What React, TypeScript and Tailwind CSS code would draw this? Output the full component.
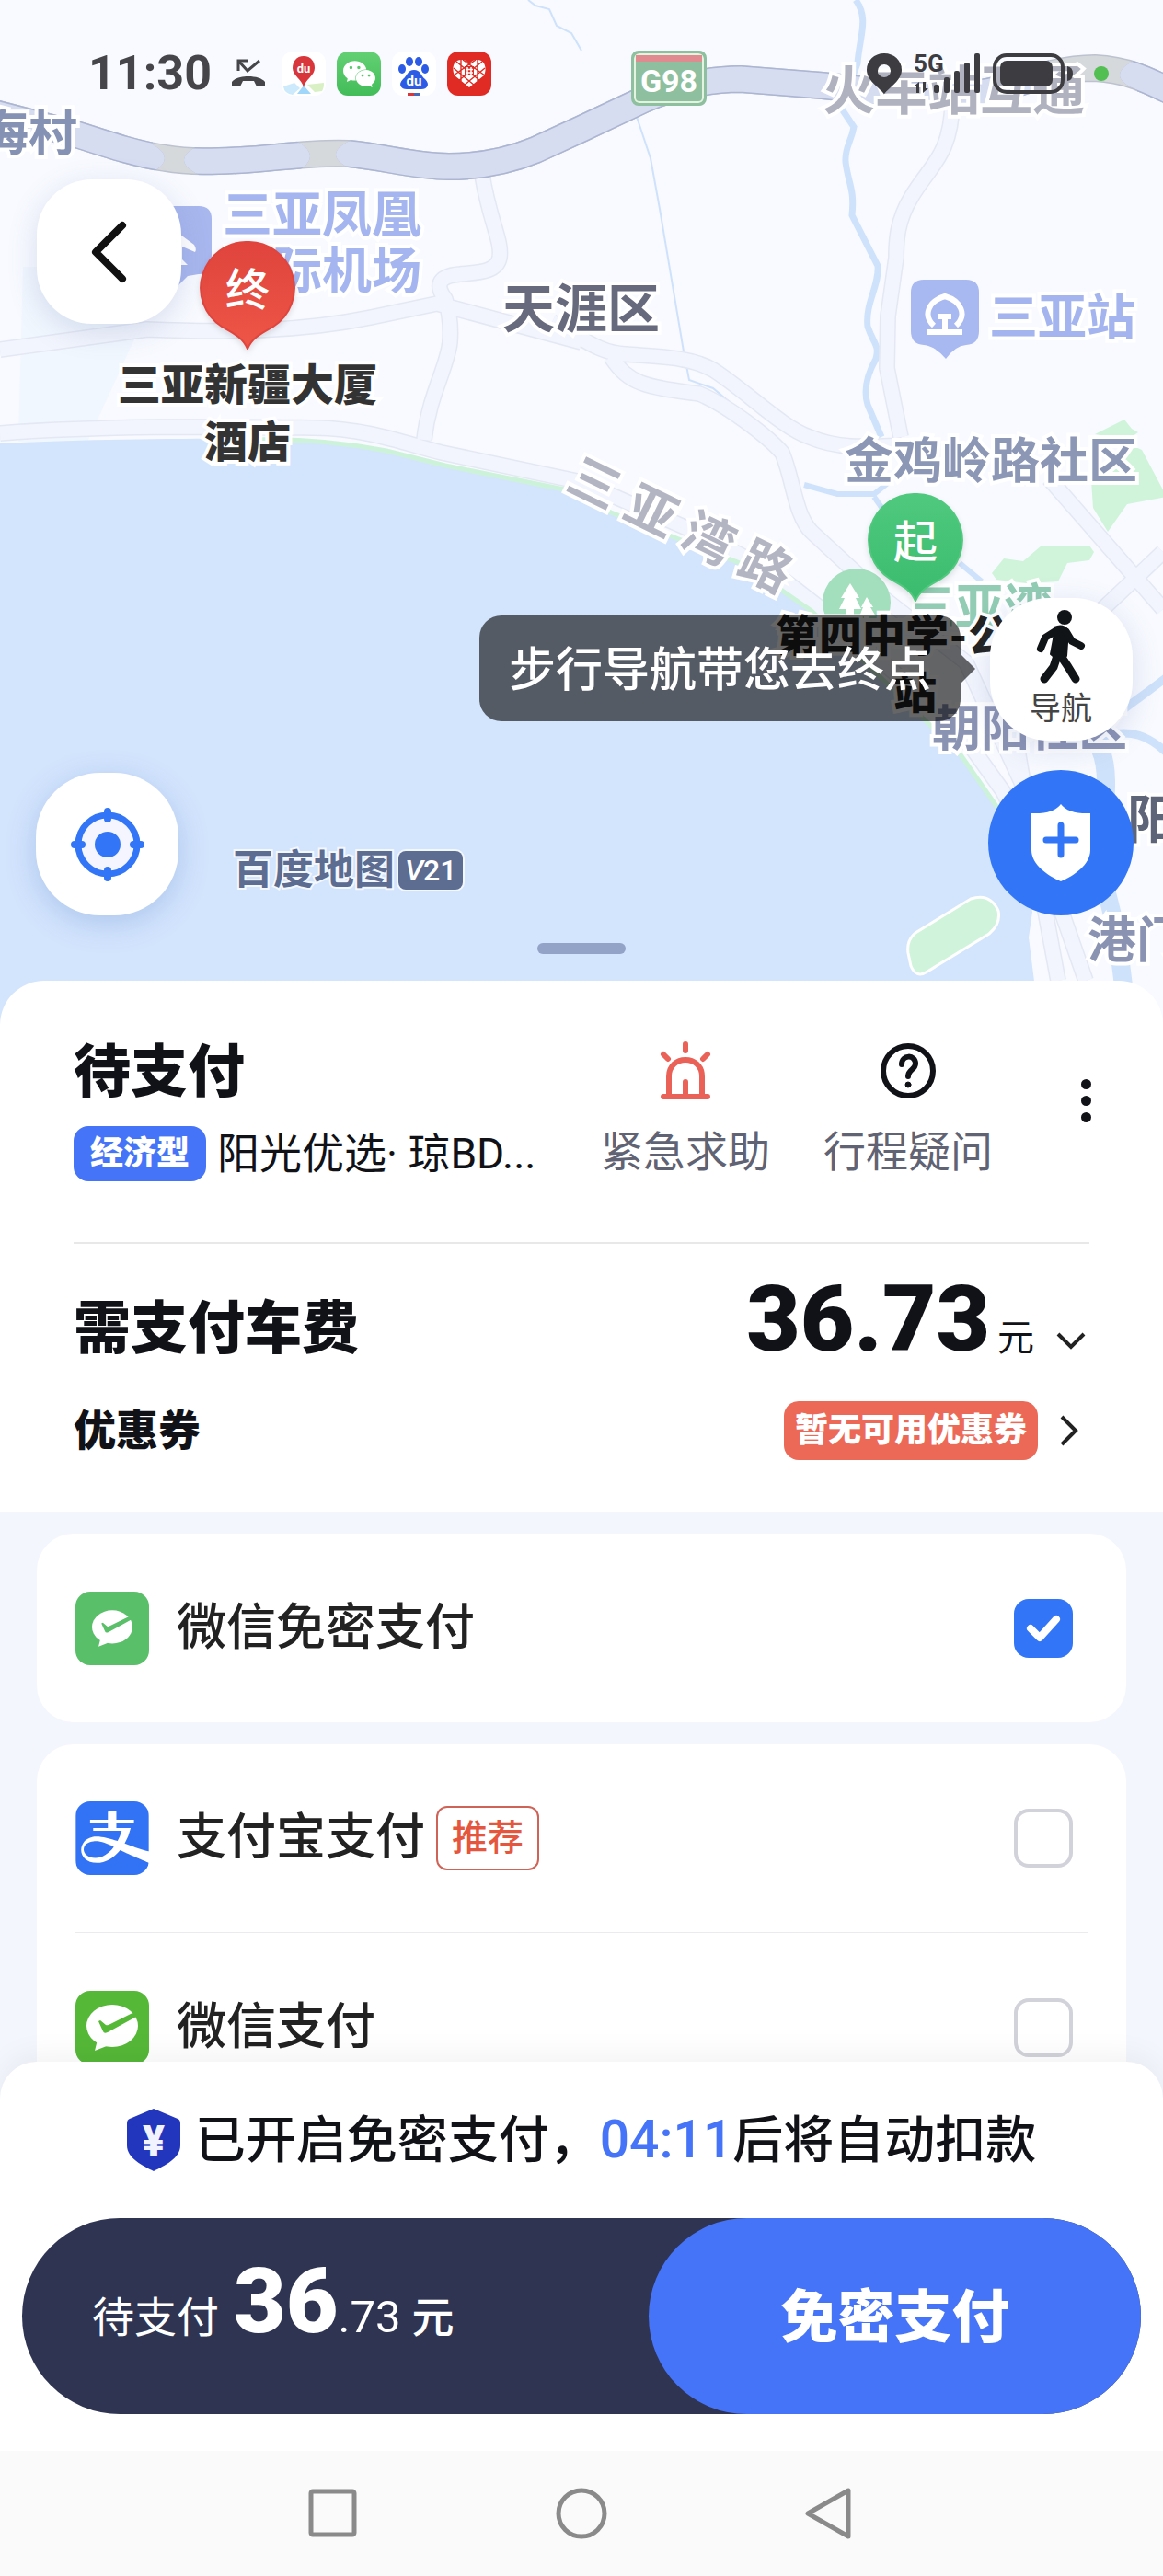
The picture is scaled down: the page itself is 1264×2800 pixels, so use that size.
import { useState, type ReactNode } from "react";
import clsx from "clsx";
import { SiAlipay, SiWechat } from "react-icons/si";

const ROAD =
  "M0 380 L160 358 C250 362 330 360 403 345 L475 330 L632 372 M524 190 C532 240 546 262 543 280 C540 296 520 296 500 298 C474 300 474 312 484 325 C490 345 490 360 489 372 C486 400 466 430 461 478 M0 471 C120 462 250 464 342 465 C400 466 440 482 480 492 L632 524 L760 580 L842 623 L890 660 L1040 790 L1090 860 L1150 980 L1180 1066 M600 350 C632 366 650 384 680 385 C720 388 750 388 775 402 C810 424 850 465 880 475 C910 488 940 486 980 484 M664 388 C684 418 700 420 760 428 C790 440 835 475 850 492 C862 520 864 560 882 578 L960 650 L1050 720 L1110 850 L1150 1066 M1035 110 C1034 170 1010 180 990 215 C975 240 974 262 974 280 L965 344 L964 400 L979 475 M1140 520 L1264 662 M1264 600 L1190 670 M1100 780 L1112 850";

const HIGHWAY =
  "M-10 122 L83 146 C120 158 150 168 180 172 C210 177 240 175 262 174 C300 172 340 165 379 167 C420 171 450 181 488 181 C530 181 560 172 582 163 L632 140 L700 108 C730 95 770 86 805 86 L894 93 L960 100 C1020 108 1060 104 1090 96 C1130 82 1160 74 1190 74 C1225 76 1245 86 1274 100";

function MapCanvas() {
  return (
    <svg
      className="absolute inset-0 h-full w-full"
      viewBox="0 0 1264 1114"
      preserveAspectRatio="xMinYMin slice"
      fill="none"
      aria-hidden="true"
    >
      <defs>
        <clipPath id="spans">
          <path d="M-20 100H166V157Q192 172 166 187V220H-20Z M216 100V158Q184 174 216 190V220H322V187Q352 170 322 153V100Z M382 100V152Q348 168 382 184V220H1140V40H640Z M1236 40V64Q1198 82 1236 98V140H1280V40Z" />
        </clipPath>
      </defs>
      <path d="M0 0H1264V1114H0Z" fill="#f8faff" />
      <path d="M25 290H150V360L95 480H20Z" fill="#eef5fe" opacity=".7" />
      <path
        d="M1190 472L1222 456L1230 466L1237 470L1225 478Z M1225 482L1241 489L1268 540L1225 548L1204 578L1188 552L1186 522Z M1078 623L1091 607L1112 610L1132 593H1184L1189 600L1184 609L1160 612L1150 632L1116 634L1083 630Z"
        fill="#cff4da"
      />
      <g stroke="#cfe2fb">
        <path d="M930 0C945 20 934 40 932 69L914 117L928 138C925 155 918 160 919 176C922 200 929 205 926 234L954 289C956 310 940 330 943 355C950 375 956 375 952 390C938 415 940 430 943 440L958 475" strokeWidth="7" />
        <path d="M692 127L707 172L717 227L743 382L749 413L775 422L826 465" strokeWidth="2" />
        <path d="M574 0L582 6L597 10L605 28L621 36L632 55" strokeWidth="2" />
        <path d="M874 527L910 537H950L965 525M950 540L985 590M1043 612L1067 632" strokeWidth="6" />
        <path d="M1268 736C1250 750 1236 760 1216 775L1200 800C1230 792 1248 800 1268 818" strokeWidth="9" />
        <path d="M1196 815C1212 850 1190 920 1200 960C1214 1010 1216 1030 1222 1080" strokeWidth="20" />
      </g>
      <path d={ROAD} stroke="#e4e8f3" strokeWidth="18" strokeLinejoin="round" />
      <path d={ROAD} stroke="#f2f5fd" strokeWidth="15" strokeLinejoin="round" />
      {/* sea */}
      <path
        d="M0 482C90 477 220 476 310 477C380 480 440 494 484 506L613 532L664 559L725 581L809 614L882 664L1043 819L1087 880L1122 991L1118 1019L1130 1114H0Z"
        fill="#d3e4fd"
      />
      <path
        d="M270 478C340 476 390 484 420 490L484 506L613 532L664 557L725 581L809 614L882 664L1043 819L1087 882"
        stroke="#cdf2da"
        strokeWidth="5"
      />
      <path
        d="M987 1036Q985 1022 995 1014L1055 977Q1076 970 1085 990Q1088 1004 1075 1015L1008 1056Q996 1064 990 1050Z"
        fill="#d0f3dc"
        stroke="#fff"
        strokeWidth="3"
      />
      {/* expressway: tunnels in grey, open stretches in lavender */}
      <path d={HIGHWAY} stroke="#bcc2cf" strokeWidth="30" />
      <path d={HIGHWAY} stroke="#d6d9dc" strokeWidth="27" />
      <g clipPath="url(#spans)">
        <path d={HIGHWAY} stroke="#acb6d3" strokeWidth="30" />
        <path d={HIGHWAY} stroke="#d6ddf1" strokeWidth="27" />
      </g>
    </svg>
  );
}

function MapLabel({ className, children }: { className: string; children: ReactNode }) {
  return (
    <span
      className={clsx(
        "absolute whitespace-nowrap [-webkit-text-stroke:8px_#fff] [paint-order:stroke]",
        className
      )}
    >
      {children}
    </span>
  );
}

function Pin({ text, from, to, className }: { text: string; from: string; to: string; className: string }) {
  return (
    <div className={clsx("absolute h-[118px] w-[104px]", className)}>
      <svg viewBox="0 0 104 118" className="h-full w-full drop-shadow-md" aria-hidden="true">
        <defs>
          <linearGradient id={text} x2="0" y2="1">
            <stop stopColor={from} />
            <stop offset="1" stopColor={to} />
          </linearGradient>
        </defs>
        <path
          d="M52 1A50 50 0 0 1 80 93C68 100 58 104 52 117C46 104 36 100 24 93A50 50 0 0 1 52 1Z"
          fill={`url(#${text})`}
          stroke={from}
          strokeWidth="2"
        />
      </svg>
      <span className="absolute inset-x-0 top-[22px] text-center text-5xl/[64px] font-medium text-white">{text}</span>
    </div>
  );
}

function StatusBar() {
  return (
    <header className="relative z-10 flex h-[160px] items-center justify-between pr-[59px] pl-24 text-[#45454a]">
      <div className="flex items-center gap-3">
        <span className="mr-2 text-[52px]/[56px] font-bold">11:30</span>
        <svg className="mr-1 h-8 w-10" viewBox="0 0 40 32" fill="none" stroke="currentColor" strokeWidth="3" aria-hidden="true">
          <path d="M9 13V2H20M9 2L19 13L32 2" />
          <path d="M2 29V25C8 17 32 17 38 25V29L29 30L26 24H14L11 30Z" fill="currentColor" stroke="none" />
        </svg>
        <svg className="size-12" viewBox="0 0 48 48" aria-hidden="true">
          <rect width="48" height="48" rx="12" fill="#fff" />
          <path d="M2 38L14 34L20 40L12 47Q3 46 2 38Z" fill="#cdeafc" />
          <path d="M17 46L24 37L32 46Z" fill="#9fd6fa" />
          <path d="M28 36L46 34Q46 40 44 43L36 44Z" fill="#d8f0c4" />
          <path d="M24 5C16 5 12 11 12 18C12 26 22 30 24 39C26 30 36 26 36 18C36 11 32 5 24 5Z" fill="#d8363b" />
          <text x="24" y="23" textAnchor="middle" fontSize="13" fontWeight="700" fill="#fff">du</text>
        </svg>
        <span className="flex size-12 items-center justify-center rounded-xl bg-linear-to-b from-[#62d073] to-[#42bd58] text-white">
          <SiWechat size={35} />
        </span>
        <svg className="size-12" viewBox="0 0 48 48" aria-hidden="true">
          <rect width="48" height="48" rx="12" fill="#fff" />
          <g fill="#2c5be6">
            <ellipse cx="11" cy="19" rx="4" ry="5" />
            <ellipse cx="19" cy="11" rx="4" ry="5" />
            <ellipse cx="29" cy="11" rx="4" ry="5" />
            <ellipse cx="36" cy="19" rx="4" ry="5" />
            <path d="M24 20C17 20 17 26 12 30C6 36 10 41 16 41H32C38 41 42 36 36 30C31 26 31 20 24 20Z" />
          </g>
          <text x="24" y="37" textAnchor="middle" fontSize="15" fontWeight="700" fill="#fff">du</text>
          <path d="M17 45h7v3h-7z" fill="#d8363b" />
          <path d="M24 45h7v3h-7z" fill="#4a68b8" />
        </svg>
        <svg className="size-12" viewBox="0 0 48 48" fill="none" aria-hidden="true">
          <rect width="48" height="48" rx="12" fill="#df2b23" />
          <path d="M24 39L8 26C4 17 8 9 15 9C20 9 22 11 24 14C26 11 28 9 33 9C40 9 44 17 40 26Z" fill="#fff" />
          <path d="M7 18L30 37M10 11L36 32M17 9L41 26M41 18L18 37M38 11L12 32M31 9L7 26M15 9V32M33 9V32" stroke="#df2b23" strokeWidth="1.4" />
          <rect x="19" y="16" width="10" height="10" fill="#df2b23" />
          <path d="M22 17v8M26 17v8M20 19.500h8M20 23h8" stroke="#fff" strokeWidth="1.500" />
        </svg>
      </div>
      <div className="flex items-center gap-3 text-[#3d3d41]">
        <svg className="h-11 w-10" viewBox="0 0 40 44" aria-hidden="true">
          <path d="M20 0C9 0 1 8 1 18C1 29 14 37 20 44C26 37 39 29 39 18C39 8 31 0 20 0ZM20 12a7 7 0 1 1 0 14a7 7 0 1 1 0-14Z" fill="currentColor" fillRule="evenodd" />
        </svg>
        <svg className="h-11 w-[74px]" viewBox="0 0 74 44" fill="currentColor" aria-hidden="true">
          <text x="0" y="20" fontSize="26" fontWeight="700">5G</text>
          <path d="M6 31V43H3V36H0Z M10 31H13V38H16L10 43Z" />
          <rect x="22" y="34" width="6" height="9" rx="2" />
          <rect x="33" y="26" width="6" height="17" rx="2" />
          <rect x="44" y="19" width="6" height="24" rx="2" />
          <rect x="55" y="10" width="6" height="33" rx="2" />
          <rect x="66" y="0" width="6" height="43" rx="2" />
        </svg>
        <svg className="mr-2 h-11 w-[90px]" viewBox="0 0 90 44" aria-hidden="true">
          <rect x="2" y="2" width="74" height="40" rx="13" fill="none" stroke="currentColor" strokeWidth="4" />
          <rect x="8" y="8" width="57" height="28" rx="7" fill="currentColor" />
          <path d="M81 14Q87 15 87 22Q87 29 81 30Z" fill="currentColor" />
        </svg>
        <span className="size-4 rounded-full bg-[#52bf52]" />
      </div>
    </header>
  );
}

function MapView() {
  return (
    <section className="relative h-[1114px] shrink-0 overflow-hidden">
      <MapCanvas />

      <MapLabel className="-left-[22px] top-[114px] text-[53px]/[64px] font-bold text-[#8592b3]">海村</MapLabel>
      <MapLabel className="left-[894px] top-[68px] text-[57px]/[64px] font-bold text-[#b0b3bf]">火车站互通</MapLabel>
      <div className="absolute top-[55px] left-[686px] flex h-[60px] w-[82px] flex-col overflow-hidden rounded-lg border-3 border-[#8ebf9e] bg-[#8ebf9e]">
        <div className="flex flex-1 flex-col rounded-md border-2 border-[#e3f3df]">
          <div className="h-[7px] bg-[#e08b90]" />
          <span className="text-center text-[34px]/[42px] font-bold text-white">G98</span>
        </div>
      </div>

      <svg className="absolute top-[224px] left-[154px] h-[90px] w-[76px]" viewBox="0 0 76 90" aria-hidden="true">
        <path d="M14 0H62Q76 0 76 14V60Q76 74 62 74L50 76L38 88L26 76L14 74Q0 74 0 60V14Q0 0 14 0Z" fill="#a8b7ee" />
        <path d="M38 28L57 42Q60 47 58 50L44 44V58L50 64H30V20Z" fill="#fff" />
      </svg>
      <MapLabel className="left-[242px] top-[204px] text-[54px]/[61px] font-bold text-[#a4b5ef]">
        三亚凤凰
        <br />
        国际机场
      </MapLabel>
      <MapLabel className="left-[546px] top-[305px] text-[57px]/[64px] font-bold text-[#666a7c]">天涯区</MapLabel>

      <svg className="absolute top-[304px] left-[990px] h-[88px] w-[74px]" viewBox="0 0 74 88" fill="none" aria-hidden="true">
        <path d="M14 0H60Q74 0 74 14V56Q74 70 60 71Q48 72 38 86Q26 72 14 71Q0 70 0 56V14Q0 0 14 0Z" fill="#a8b8f0" />
        <path d="M25 50C12 38 20 23 37 18C54 23 62 38 49 50M18 57H56M37 42V56M30 40H44" stroke="#fff" strokeWidth="6" />
      </svg>
      <MapLabel className="left-[1075px] top-[314px] text-[53px]/[64px] font-bold text-[#a3b4ee]">三亚站</MapLabel>
      <MapLabel className="left-[918px] top-[470px] text-[53px]/[64px] font-bold text-[#8b97b5]">金鸡岭路社区</MapLabel>

      <div className="absolute top-[539px] left-[608px] flex rotate-[26deg] gap-[14px] text-[55px]/[64px] font-bold text-[#b3b6c2] [-webkit-text-stroke:8px_#fff] [paint-order:stroke]">
        <span>三</span>
        <span>亚</span>
        <span>湾</span>
        <span>路</span>
      </div>

      <svg className="absolute top-[618px] left-[894px] size-[74px]" viewBox="0 0 74 74" aria-hidden="true">
        <circle cx="37" cy="37" r="37" fill="#a3debd" />
        <path d="M30 16L40 32H36L42 44H34V56H26V44H18L24 32H20Z M48 31L55 42H52L58 52H50V58H45V52H40L44 42H42Z" fill="#fff" />
      </svg>
      <MapLabel className="left-[985px] top-[629px] text-[53px]/[64px] font-bold text-[#92ccb4]">三亚湾</MapLabel>
      <MapLabel className="left-[1013px] top-[761px] text-[53px]/[64px] font-bold text-[#8b93b3]">朝阳社区</MapLabel>
      <MapLabel className="left-[1225px] top-[860px] text-[57px]/[64px] font-bold text-[#5f6579]">阳</MapLabel>
      <MapLabel className="left-[1182px] top-[991px] text-[53px]/[64px] font-bold text-[#8b93b3]">港门</MapLabel>

      <MapLabel className="left-[128px] top-[388px] text-center text-[47px]/[62px] font-black text-[#333]">
        三亚新疆大厦
        <br />
        酒店
      </MapLabel>
      <MapLabel className="left-[843px] top-[661px] text-center text-[47px]/[62px] font-black text-[#222]">
        第四中学-公交
        <br />站
      </MapLabel>
      <Pin text="终" from="#e0443d" to="#ee5646" className="top-[262px] left-[217px]" />
      <Pin text="起" from="#4fc97d" to="#3abb6e" className="top-[536px] left-[943px]" />

      <p className="absolute top-[923px] left-[253px] flex items-center gap-1 text-[44px]/[46px] font-bold text-[#5d6c91]">
        <span className="[-webkit-text-stroke:4px_#f3f8ff] [paint-order:stroke]">百度地图</span>
        <span className="rounded-lg bg-[#5d6c91] px-[7px] text-[32px]/[42px] font-medium text-white ring-2 ring-[#f3f8ff]">
          <i>V</i>21
        </span>
      </p>

      <StatusBar />

      <button
        type="button"
        aria-label="返回"
        className="absolute top-[195px] left-10 flex size-[157px] items-center justify-center rounded-[60px] bg-white shadow-[0_8px_32px_rgba(90,110,170,0.2)]"
      >
        <svg className="h-[72px] w-11" viewBox="0 0 44 72" fill="none" stroke="#111" strokeWidth="8" strokeLinecap="round" strokeLinejoin="round" aria-hidden="true">
          <path d="M36 7L7 36L36 65" />
        </svg>
      </button>

      <div className="absolute top-[669px] left-[521px] flex items-center">
        <span className="rounded-3xl bg-black/60 px-8 pt-[26px] pb-[22px] text-[51px]/[67px] font-medium whitespace-nowrap text-white">
          步行导航带您去终点
        </span>
        <svg className="h-8 w-4" viewBox="0 0 16 32" aria-hidden="true">
          <path d="M0 0L16 16L0 32Z" fill="rgba(0,0,0,.6)" />
        </svg>
      </div>

      <div className="absolute top-[650px] right-8 flex flex-col items-center gap-8">
        <button
          type="button"
          className="flex size-[155px] flex-col items-center rounded-[64px] bg-white pt-3 text-[34px]/[44px] text-[#444] shadow-[0_8px_32px_rgba(90,110,170,0.2)]"
        >
          <svg className="mb-1 h-[82px] w-[54px]" viewBox="-1 -1 54 82" fill="none" stroke="#111417" strokeLinecap="round" strokeLinejoin="round" aria-hidden="true">
            <circle cx="30" cy="8" r="8" fill="#111417" stroke="none" />
            <path d="M19 19Q28 15 34 22L32 50L22 54L15 48L18 32Z" fill="#111417" strokeWidth="2" />
            <path d="M20 23L9 30L4 42M32 24L38 34L48 39" strokeWidth="8" />
            <path d="M22 50L18 62L8 75M26 50L34 62L42 75" strokeWidth="9" />
          </svg>
          导航
        </button>
        <button type="button" aria-label="安全中心" className="flex size-[158px] items-center justify-center rounded-full bg-[#3276f7]">
          <svg className="h-[84px] w-[64px]" viewBox="0 0 64 84" aria-hidden="true">
            <path d="M32 0Q40 11 64 10V50C64 66 46 78 32 84C18 78 0 66 0 50V10Q24 11 32 0Z" fill="#fff" />
            <path d="M32 23V55M16 39H48" stroke="#3276f7" strokeWidth="7" strokeLinecap="round" />
          </svg>
        </button>
      </div>

      <button
        type="button"
        aria-label="定位"
        className="absolute top-[840px] left-[39px] flex size-[155px] items-center justify-center rounded-[70px] bg-white shadow-[0_8px_32px_rgba(60,110,190,0.25)]"
      >
        <svg className="size-20" viewBox="0 0 80 80" fill="none" stroke="#3276f7" strokeLinecap="round" aria-hidden="true">
          <circle cx="40" cy="40" r="32" strokeWidth="7" fill="#f4f5fe" />
          <circle cx="40" cy="40" r="14" fill="#3276f7" stroke="none" />
          <path d="M40 4V12M40 68V76M4 40H12M68 40H76" strokeWidth="8" />
        </svg>
      </button>

      <div className="absolute top-[1025px] left-1/2 h-3 w-24 -translate-x-1/2 rounded-full bg-[#93a2c7]" />
    </section>
  );
}

function TripPanel() {
  return (
    <section className="relative -mt-12 rounded-t-[48px] bg-white px-20 pt-16 pb-14 text-[#111217]">
      <div className="flex items-center justify-between border-b-2 border-[#e8e8e8] pb-16">
        <div>
          <h1 className="text-[62px]/[72px] font-black">待支付</h1>
          <p className="mt-5 flex items-center gap-3 text-[46px]/[64px] whitespace-nowrap">
            <span className="rounded-2xl bg-[#4674f8] px-[18px] text-[36px]/[60px] font-black text-white">经济型</span>
            <span>阳光优选· 琼BD...</span>
          </p>
        </div>
        <div className="-mt-1 flex items-center gap-[58px] text-[46px]/[56px] whitespace-nowrap text-[#5f6373]">
          <button type="button" className="flex flex-col items-center gap-7">
            <svg className="size-16" viewBox="0 0 64 64" fill="none" stroke="#ea6257" strokeWidth="6" strokeLinecap="round" strokeLinejoin="round" aria-hidden="true">
              <path d="M8 60H56M14 59V38C14 14 50 14 50 38V59M32 44V59M32 3V10M8 14L13 19M56 14L51 19" />
            </svg>
            紧急求助
          </button>
          <button type="button" className="flex flex-col items-center gap-7">
            <svg className="size-16" viewBox="0 0 64 64" fill="none" stroke="#111217" strokeWidth="6" strokeLinecap="round" aria-hidden="true">
              <circle cx="32" cy="32" r="27" />
              <path d="M25 25C25 14 40 14 40 24C40 31 32 30 32 38" />
              <circle cx="32" cy="47" r="3" fill="#111217" strokeWidth="1" />
            </svg>
            行程疑问
          </button>
          <button type="button" aria-label="更多" className="-mr-0.5 mb-5 ml-[38px] flex flex-col gap-[7px]">
            <span className="size-[11px] rounded-full bg-[#111217]" />
            <span className="size-[11px] rounded-full bg-[#111217]" />
            <span className="size-[11px] rounded-full bg-[#111217]" />
          </button>
        </div>
      </div>

      <div className="mt-8 flex items-center justify-between">
        <h2 className="pt-5 text-[62px]/[72px] font-black">需支付车费</h2>
        <button type="button" className="flex items-baseline pr-1">
          <span className="text-[101px]/[100px] font-black">36.73</span>
          <span className="mr-6 ml-2 text-[40px]">元</span>
          <svg className="h-5 w-8" viewBox="0 0 32 20" fill="none" stroke="#222" strokeWidth="4" aria-hidden="true">
            <path d="M2 2L16 16L30 2" />
          </svg>
        </button>
      </div>

      <div className="mt-[38px] flex items-center justify-between">
        <h3 className="text-[46px]/[56px] font-black">优惠券</h3>
        <button type="button" className="flex items-center gap-6 pr-3">
          <span className="rounded-2xl bg-[#ec6857] px-3 text-[36px]/[64px] font-black text-white">暂无可用优惠券</span>
          <svg className="h-9 w-5" viewBox="0 0 20 36" fill="none" stroke="#222" strokeWidth="4" aria-hidden="true">
            <path d="M2 3L17 18L2 33" />
          </svg>
        </button>
      </div>
    </section>
  );
}

function WechatPayIcon({ className, small }: { className: string; small?: boolean }) {
  return (
    <span className={clsx("flex size-20 items-center justify-center rounded-2xl", className)}>
      <svg className={small ? "h-10 w-11" : "h-[50px] w-14"} viewBox="0 0 56 50" aria-hidden="true">
        <ellipse cx="28" cy="23" rx="28" ry="23" fill="#fff" />
        <path d="M12 38L9 50L22 45Z" fill="#fff" />
        <path d="M13 18L15 17L21 22Q23 23 26 21L50 9L56 12L23 30Q19 32 18 29Z" className="fill-current" />
      </svg>
    </span>
  );
}

type Method = { id: string; name: string; icon: ReactNode; recommended?: boolean };

const passwordFree: Method[] = [
  { id: "wechat-free", name: "微信免密支付", icon: <WechatPayIcon small className="bg-[#5abf69] text-[#5abf69]" /> },
];

const others: Method[] = [
  {
    id: "alipay",
    name: "支付宝支付",
    icon: (
      <span className="flex size-20 overflow-hidden rounded-2xl bg-white text-[#3273f6]">
        <SiAlipay size={80} />
      </span>
    ),
    recommended: true,
  },
  { id: "wechat", name: "微信支付", icon: <WechatPayIcon className="bg-[#55b837] text-[#55b837]" /> },
];

function MethodCard({ methods, value, onChange }: { methods: Method[]; value: string; onChange: (id: string) => void }) {
  return (
    <div className="rounded-[40px] bg-white px-[42px]">
      {methods.map((m) => (
        <label key={m.id} className="flex h-[205px] items-center border-b border-[#ebebee] pr-4 text-[54px]/[72px] font-medium text-[#222] last:border-b-0">
          {m.icon}
          <span className="ml-[30px]">{m.name}</span>
          {m.recommended && (
            <span className="ml-3 rounded-xl border-2 border-[#cf6357] px-[15px] text-[39px]/[66px] text-[#e5563f]">推荐</span>
          )}
          <span className="relative ml-auto flex size-16">
            <input
              type="checkbox"
              checked={value === m.id}
              onChange={() => onChange(m.id)}
              className="size-16 appearance-none rounded-2xl border-4 border-[#d2d2da] checked:border-[#3276f7] checked:bg-[#3276f7]"
            />
            {value === m.id && (
              <svg className="pointer-events-none absolute inset-0" viewBox="0 0 64 64" fill="none" stroke="#fff" strokeWidth="8" strokeLinecap="round" strokeLinejoin="round" aria-hidden="true">
                <path d="M18 32L28 42L46 22" />
              </svg>
            )}
          </span>
        </label>
      ))}
    </div>
  );
}

function PayFooter() {
  return (
    <footer className="relative -mt-10 shrink-0 rounded-t-[40px] bg-white px-6 pt-12 pb-10 shadow-[0_-8px_32px_rgba(0,0,0,0.05)]">
      <p className="flex items-center justify-center text-[55px]/[74px] font-medium text-[#111217]">
        <svg className="mr-4 h-[68px] w-[58px]" viewBox="0 0 60 68" preserveAspectRatio="none" aria-hidden="true">
          <path d="M30 0L57 11Q60 12 60 16V40C60 54 42 62 30 68C18 62 0 54 0 40V16Q0 12 3 11Z" fill="#2236bd" />
          <text x="30" y="51" textAnchor="middle" fontSize="46" fontWeight="900" fill="#f1f4ff">¥</text>
        </svg>
        <span>已开启免密支付，</span>
        <time className="text-[57px] text-[#4674f8]">04:11</time>
        <span>后将自动扣款</span>
      </p>
      <div className="mt-12 flex h-[213px] items-center rounded-full bg-[#2e3451] text-white">
        <p className="mb-8 flex flex-1 items-baseline pl-[76px] text-[46px]/[56px] whitespace-nowrap">
          待支付
          <strong className="ml-4 text-[98px]/[100px] font-black">36</strong>
          <span className="text-[49px]">.73</span>
          <span className="ml-3 font-medium">元</span>
        </p>
        <button type="button" className="h-full w-[44%] rounded-full bg-[#4674f8] pt-1 text-[62px] font-black">
          免密支付
        </button>
      </div>
    </footer>
  );
}

function SystemNav() {
  return (
    <nav className="relative flex h-[136px] shrink-0 items-center justify-center gap-[214px] bg-[#fafafa] text-[#8a8a8a]">
      <button type="button" aria-label="最近任务">
        <svg className="size-14" viewBox="0 0 56 56" fill="none" stroke="currentColor" strokeWidth="5" aria-hidden="true">
          <rect x="4" y="4" width="47" height="47" rx="2" />
        </svg>
      </button>
      <button type="button" aria-label="主屏幕">
        <svg className="size-14" viewBox="0 0 56 56" fill="none" stroke="currentColor" strokeWidth="5" aria-hidden="true">
          <circle cx="28" cy="28" r="25" />
        </svg>
      </button>
      <button type="button" aria-label="返回上一页">
        <svg className="size-14" viewBox="0 0 56 56" fill="none" stroke="currentColor" strokeWidth="5" strokeLinejoin="round" aria-hidden="true">
          <path d="M48 3V53L4 28Z" />
        </svg>
      </button>
    </nav>
  );
}

export default function App() {
  const [method, setMethod] = useState("wechat-free");

  return (
    <div className="flex h-screen flex-col overflow-hidden bg-[#f4f6fd] font-[Roboto,'Noto_Sans_CJK_SC',sans-serif]">
      <main className="min-h-0 flex-1 overflow-y-auto [scrollbar-width:none]">
        <MapView />
        <TripPanel />
        <div className="flex flex-col gap-6 px-10 py-6">
          <MethodCard methods={passwordFree} value={method} onChange={setMethod} />
          <MethodCard methods={others} value={method} onChange={setMethod} />
        </div>
      </main>
      <PayFooter />
      <SystemNav />
    </div>
  );
}
